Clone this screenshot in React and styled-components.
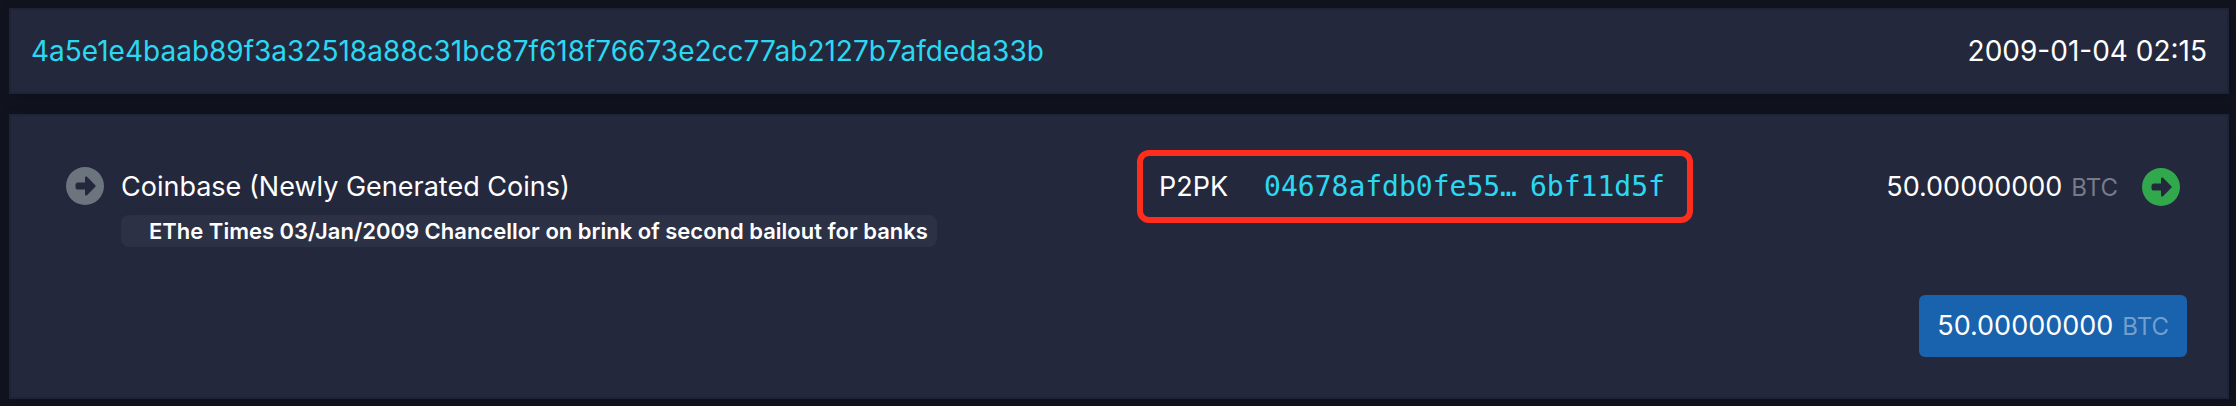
import React from "react";
import styled, { createGlobalStyle } from "styled-components";
import { FaCircleRight } from "react-icons/fa6";

const GlobalStyle = createGlobalStyle`
  *, *::before, *::after { box-sizing: border-box; }
  body {
    margin: 0;
    background: #11131f;
    color: #fff;
    font-family: Inter, "Liberation Sans", sans-serif;
    font-size: 28px;
    line-height: 42px;
  }
`;

const Page = styled.main`
  display: flex;
  flex-direction: column;
  gap: 20px;
  padding: 8px 7px 7px 9px;
`;

const Card = styled.section`
  background: #24283c;
  border: 2px solid #1f2337;
  box-shadow: 4px 4px 14px rgba(0, 0, 0, 0.2);
`;

const Header = styled(Card)`
  display: flex;
  justify-content: space-between;
  align-items: center;
  gap: 24px;
  padding: 20px;
`;

const Details = styled(Card)`
  padding: 34px 40px 40px 55px;
  font-size: 27px;
`;

const Link = styled.a`
  color: #2bd8f2;
  text-decoration: none;
`;

const TxLink = styled(Link)`
  min-width: 0;
  overflow-wrap: anywhere;
`;

const Columns = styled.div`
  display: flex;
`;

const Inputs = styled.div`
  flex: 1;
  min-width: 0;
  display: flex;
  align-items: flex-start;
  gap: 17px;
  padding-top: 16px;
`;

const Outputs = styled.div`
  flex: 1;
  min-width: 0;
  display: flex;
  align-items: center;
  align-self: flex-start;
  padding: 0 7px 0 28px;
`;

const ArrowIcon = styled(FaCircleRight)`
  flex: none;
  width: 38px;
  height: 38px;
  margin: 1px 0;
  color: ${(p) => p.$color};
`;

const Source = styled.div`
  min-width: 0;
  display: flex;
  flex-direction: column;
  align-items: flex-start;
  padding-bottom: 48px;
`;

const Message = styled.span`
  margin-top: 7px;
  padding: 0 9px 0 28px;
  border-radius: 8px;
  background: #2d3145;
  font-size: 22px;
  font-weight: 600;
  line-height: 32px;
`;

const Highlight = styled.div`
  display: flex;
  align-items: center;
  gap: 36px;
  padding: 10px 22px 9px 16px;
  border: 6px solid #ff2d1c;
  border-radius: 12px;
  white-space: nowrap;
`;

const KeyLink = styled(Link)`
  display: flex;
  gap: 13px;
  font-family: "DejaVu Sans Mono", "Liberation Mono", monospace;
  font-size: 28px;
`;

const Amount = styled.span`
  white-space: nowrap;
`;

const Unit = styled.span`
  margin-left: 9px;
  font-size: 24px;
  line-height: 1;
  color: ${(p) => p.$color};
`;

const Value = styled.div`
  display: flex;
  align-items: center;
  gap: 24px;
  margin-left: auto;
`;

const Footer = styled.div`
  display: flex;
  justify-content: flex-end;
`;

const TotalButton = styled.button`
  padding: 10px 18px;
  border: 0;
  border-radius: 6px;
  background: #1962ad;
  color: #fff;
  font: inherit;
  cursor: pointer;
`;

function Btc({ value, unitColor }) {
  return (
    <Amount>
      {value}
      <Unit $color={unitColor}>BTC</Unit>
    </Amount>
  );
}

export default function App() {
  return (
    <>
      <GlobalStyle />
      <Page>
        <Header>
          <TxLink href="#tx">
            4a5e1e4baab89f3a32518a88c31bc87f618f76673e2cc77ab2127b7afdeda33b
          </TxLink>
          <time dateTime="2009-01-04T02:15">2009-01-04 02:15</time>
        </Header>
        <Details>
          <Columns>
            <Inputs>
              <ArrowIcon $color="#6c757d" aria-hidden="true" />
              <Source>
                <span>Coinbase (Newly Generated Coins)</span>
                <Message>
                  EThe Times 03/Jan/2009 Chancellor on brink of second bailout for banks
                </Message>
              </Source>
            </Inputs>
            <Outputs>
              <Highlight>
                <span>P2PK</span>
                <KeyLink href="#address">
                  <span>04678afdb0fe55…</span>
                  <span>6bf11d5f</span>
                </KeyLink>
              </Highlight>
              <Value>
                <Btc value="50.00000000" unitColor="#777a88" />
                <ArrowIcon $color="#31a84b" aria-hidden="true" />
              </Value>
            </Outputs>
          </Columns>
          <Footer>
            <TotalButton type="button">
              <Btc value="50.00000000" unitColor="#729fcd" />
            </TotalButton>
          </Footer>
        </Details>
      </Page>
    </>
  );
}
